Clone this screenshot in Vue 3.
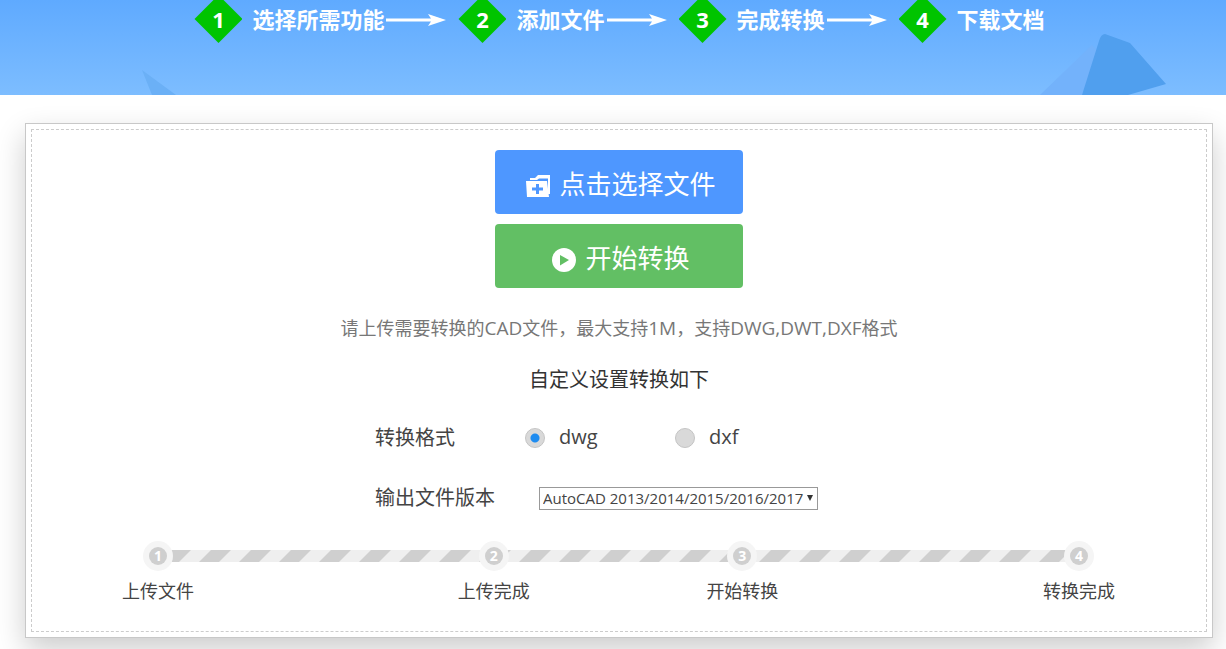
<script setup>
import { ref } from 'vue'

const guide = ['选择所需功能', '添加文件', '完成转换', '下载文档']
const formats = ['dwg', 'dxf']
const versions = ['AutoCAD 2013/2014/2015/2016/2017', 'AutoCAD 2010/2011/2012', 'AutoCAD 2007/2008/2009', 'AutoCAD 2004/2005/2006']
const stages = [
  { name: '上传文件', span: 336 },
  { name: '上传完成', span: 249 },
  { name: '开始转换', span: 337 },
  { name: '转换完成', span: 0 }
]
const format = ref('dwg')
const version = ref(versions[0])
</script>

<template>
  <div class="page">
    <header class="banner">
      <svg class="shard shard-left" width="34" height="25" viewBox="0 0 34 25" aria-hidden="true">
        <path d="M0 0L34 25H10Z" fill="#6bb0f6" />
      </svg>
      <svg class="shard shard-right" width="126" height="61" viewBox="0 0 126 61" aria-hidden="true">
        <path d="M0 61L52 11L60 20L42 61Z" fill="#73b2fb" />
        <path d="M42 61L59 7Q61 0 65 0L90 9L126 50L88 61Z" fill="#509fee" />
      </svg>
      <ol class="guide">
        <li v-for="(name, i) in guide" :key="name">
          <span class="diamond">{{ i + 1 }}</span>
          <span class="guide-name">{{ name }}</span>
          <svg v-if="i < guide.length - 1" class="arrow" width="60" height="14" viewBox="0 0 60 14" aria-hidden="true">
            <path d="M0 5.500H45L42 1L60 7L42 13L45 8.500H0Z" fill="#fff" />
          </svg>
        </li>
      </ol>
    </header>

    <main class="card">
      <div class="panel">
        <button type="button" class="action pick">
          <svg width="24" height="24" viewBox="0 0 24 24" aria-hidden="true">
            <path d="M4 4L9 4L12 1H24V20H22V4.500H13L11 6H4Z" fill="#fff" />
            <path fill-rule="evenodd" d="M0 7H21L23 23H1ZM10 10V13.500H6V16.500H10V20H13V16.500H17V13.500H13V10Z" fill="#fff" />
          </svg>
          <span>点击选择文件</span>
        </button>
        <button type="button" class="action start">
          <svg width="24" height="24" viewBox="0 0 24 24" aria-hidden="true">
            <circle cx="12" cy="12" r="12" fill="#fff" />
            <path d="M8 7L17 12L8 17.500Z" fill="#62bf64" />
          </svg>
          <span>开始转换</span>
        </button>
        <p class="hint">请上传需要转换的<span>CAD</span>文件，最大支持<span>1M</span>，支持<span>DWG,DWT,DXF</span>格式</p>
        <h2 class="heading">自定义设置转换如下</h2>

        <form class="options" @submit.prevent>
          <div class="row" role="radiogroup" aria-labelledby="format-label">
            <span id="format-label" class="row-label">转换格式</span>
            <label v-for="f in formats" :key="f" class="choice">
              <input v-model="format" type="radio" name="format" :value="f" />
              <span>{{ f }}</span>
            </label>
          </div>
          <div class="row">
            <label class="row-label" for="version">输出文件版本</label>
            <div class="select-box">
              <select id="version" v-model="version">
                <option v-for="v in versions" :key="v">{{ v }}</option>
              </select>
              <svg class="caret" width="6" height="6" viewBox="0 0 6 6" aria-hidden="true">
                <path d="M0 0H6L3 6Z" fill="#333" />
              </svg>
            </div>
          </div>
        </form>

        <div class="progress">
          <svg class="track" height="12" aria-hidden="true">
            <defs>
              <pattern id="stripes" width="40" height="12" patternUnits="userSpaceOnUse">
                <rect width="40" height="12" fill="#efefef" />
                <path d="M13 0H33L21 12H1Z" fill="#cfcfcf" />
              </pattern>
            </defs>
            <rect width="100%" height="12" fill="url(#stripes)" />
          </svg>
          <ol class="stages">
            <li v-for="(s, i) in stages" :key="s.name" :style="{ flexGrow: s.span }">
              <div class="stage">
                <span class="dot"><b>{{ i + 1 }}</b></span>
                <span>{{ s.name }}</span>
              </div>
            </li>
          </ol>
        </div>
      </div>
    </main>
  </div>
</template>

<style>
body {
  margin: 0;
  background: #fff;
}
</style>

<style scoped>
.page {
  box-sizing: border-box;
  min-height: 100vh;
  overflow: hidden;
  font-family: "Open Sans", "Noto Sans CJK SC", sans-serif;
  color: #444;
}
ol {
  list-style: none;
  margin: 0;
  padding: 0;
}
.banner {
  position: relative;
  height: 95px;
  overflow: hidden;
  background: linear-gradient(#5faaff, #7dbdff);
}
.shard {
  position: absolute;
  bottom: 0;
}
.shard-left {
  left: 142px;
}
.shard-right {
  right: 60px;
}
.guide {
  position: relative;
  display: flex;
  justify-content: center;
  margin-top: -5px;
  padding-left: 13px;
  color: #fff;
  font-size: 22px;
  font-weight: 700;
  line-height: 48px;
}
.guide li {
  display: flex;
  align-items: center;
  white-space: nowrap;
}
.diamond {
  width: 48px;
  margin-right: 10px;
  text-align: center;
  background: #00c400;
  clip-path: polygon(50% 0, 100% 50%, 50% 100%, 0 50%);
}
.arrow {
  margin: 2px 12px 0 2px;
}
.card {
  margin: 28px 13px 0 25px;
  padding: 5px;
  border: 1px solid #c8c8c8;
  background: #fff;
  box-shadow: 0 12px 28px rgba(0, 0, 0, 0.2);
}
.panel {
  display: flex;
  flex-direction: column;
  align-items: center;
  padding: 20px 0 24px;
  border: 1px dashed #ccc;
}
.action {
  display: flex;
  align-items: center;
  justify-content: center;
  gap: 9px;
  width: 248px;
  height: 64px;
  padding: 4px 0 0 4px;
  border: 0;
  border-radius: 4px;
  color: #fff;
  font-family: inherit;
  font-size: 26px;
  line-height: 40px;
}
.action svg {
  margin-top: 4px;
}
.pick {
  background: #4e97ff;
}
.start {
  margin-top: 10px;
  background: #62bf64;
}
.hint {
  margin: 24px 0 0;
  color: #777;
  font-size: 18px;
  line-height: 32px;
}
.hint span {
  font-size: 19px;
}
.heading {
  margin: 20px 0 0;
  color: #333;
  font-size: 20px;
  font-weight: 400;
  line-height: 32px;
}
.options {
  width: 488px;
  margin-top: 12px;
}
.row {
  display: flex;
  align-items: center;
  height: 60px;
  font-size: 20px;
}
.row-label {
  width: 150px;
  padding-bottom: 4px;
  white-space: nowrap;
}
.choice {
  display: flex;
  align-items: center;
  gap: 14px;
  width: 150px;
}
.choice span {
  padding-bottom: 4px;
}
.choice input {
  appearance: none;
  width: 20px;
  height: 20px;
  margin: 0;
  border: 1px solid #c4c4c4;
  border-radius: 50%;
  background: #d9d9d9;
}
.choice input:checked {
  background: radial-gradient(circle, #1f8cf0 4px, #d9d9d9 5px);
}
.select-box {
  position: relative;
  margin-left: 14px;
}
.select-box select {
  display: block;
  appearance: none;
  width: 279px;
  height: 23px;
  padding: 0 3px;
  border: 1px solid #999;
  border-radius: 0;
  background: #fff;
  color: #444;
  font-family: inherit;
  font-size: 15px;
  line-height: 21px;
}
.caret {
  position: absolute;
  top: 8px;
  right: 5px;
  pointer-events: none;
}
.progress {
  position: relative;
  align-self: stretch;
  margin: 13px 91px 0 90px;
}
.track {
  position: absolute;
  top: 9px;
  left: 36px;
  width: calc(100% - 72px);
}
.stages {
  position: relative;
  display: flex;
}
.stages li {
  flex: 0 0 0;
}
.stages li:last-child {
  flex-basis: 72px;
}
.stage {
  display: flex;
  flex-direction: column;
  align-items: center;
  width: 72px;
  font-size: 18px;
  line-height: 32px;
  white-space: nowrap;
}
.dot {
  display: flex;
  align-items: center;
  justify-content: center;
  width: 30px;
  height: 30px;
  margin-bottom: 4px;
  border-radius: 50%;
  background: #f5f5f5;
}
.dot b {
  width: 18px;
  height: 18px;
  border-radius: 50%;
  background: #cfcfcf;
  color: #fff;
  font-size: 14px;
  line-height: 18px;
  text-align: center;
}
</style>
